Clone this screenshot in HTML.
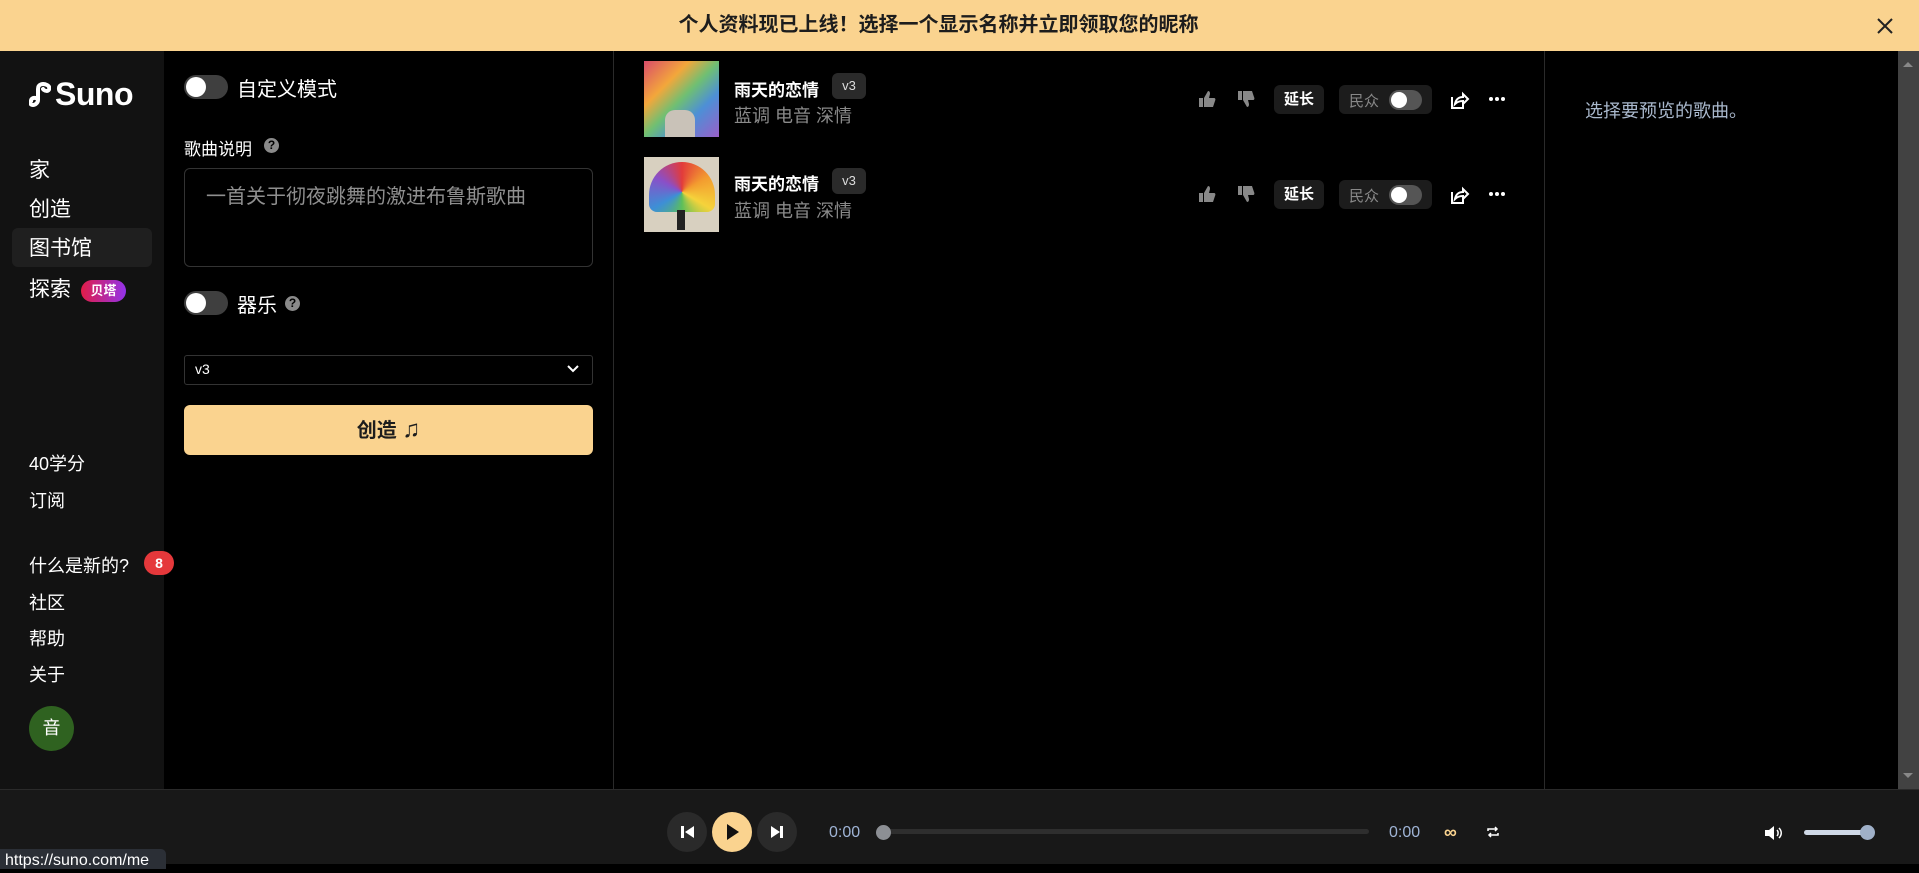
<!DOCTYPE html>
<html><head><meta charset="utf-8"><style>
*{margin:0;padding:0;box-sizing:border-box}
body{width:1919px;height:864px;background:#000;font-family:"Liberation Sans","Noto Sans CJK SC",sans-serif;color:#fff;position:relative;overflow:hidden}
.a{position:absolute}
.banner{left:0;top:0;width:1919px;height:51px;background:#fad38f;color:#1d1d1d;font-weight:bold;font-size:20px;text-align:center;line-height:51px;padding-right:42px}
.side{left:0;top:51px;width:164px;height:738px;background:#121212}
.nav{left:29px;font-size:21px;color:#fff}
.nav2{left:29px;font-size:18px;color:#fff}
.tog{width:44px;height:24px;border-radius:12px;background:#3f3f3f}
.tog::after{content:"";position:absolute;left:2px;top:2px;width:20px;height:20px;border-radius:50%;background:#fff}
.tog.s::after{width:16px;height:16px}
.q{width:15px;height:15px;border-radius:50%;background:#8a8a8a;color:#000;font-size:12px;font-weight:bold;text-align:center;line-height:15px}
.title{font-size:17px;font-weight:bold}
.badge{background:#2a2a2a;border-radius:6px;font-size:13px;color:#ddd;text-align:center;line-height:26px;width:34px;height:26px}
.tags{font-size:18px;color:#8a8a8a}
.pill{background:#1c1c1c;border-radius:6px;height:29px}
</style></head><body>
<div class="a banner">个人资料现已上线！选择一个显示名称并立即领取您的昵称</div>
<svg class="a" style="left:1877px;top:18px" width="16" height="16" viewBox="0 0 16 16"><path d="M1 1L15 15M15 1L1 15" stroke="#222" stroke-width="2"/></svg>

<div class="a side"></div>
<svg class="a" style="left:29px;top:81px" width="22" height="26" viewBox="0 0 22 26"><path d="M2 20c0-4 6-4 7-1 0 3-3 5-5 5S0 22 2 20zM9 19V8c0-5 5-6 9-4 4 2 2 6 0 6-3 0-4-2-4-2" fill="none" stroke="#fff" stroke-width="4" stroke-linecap="round"/></svg>
<div class="a" style="left:55px;top:76px;font-size:32px;font-weight:bold;letter-spacing:-0.5px">Suno</div>
<div class="a nav" style="top:154px">家</div>
<div class="a nav" style="top:193px">创造</div>
<div class="a" style="left:12px;top:228px;width:140px;height:39px;background:#1f1f1f;border-radius:6px"></div>
<div class="a nav" style="top:232px">图书馆</div>
<div class="a nav" style="top:273px">探索</div>
<div class="a" style="left:81px;top:280px;width:45px;height:22px;border-radius:11px;background:linear-gradient(90deg,#e11d48,#9333ea);font-size:13px;font-weight:bold;text-align:center;line-height:22px">贝塔</div>
<div class="a nav2" style="top:450px">40学分</div>
<div class="a nav2" style="top:487px">订阅</div>
<div class="a nav2" style="top:552px">什么是新的?</div>
<div class="a" style="left:144px;top:551px;width:30px;height:24px;border-radius:12px;background:#e5383b;font-size:14px;font-weight:bold;text-align:center;line-height:24px">8</div>
<div class="a nav2" style="top:589px">社区</div>
<div class="a nav2" style="top:625px">帮助</div>
<div class="a nav2" style="top:661px">关于</div>
<div class="a" style="left:29px;top:706px;width:45px;height:45px;border-radius:50%;background:#2f6220;font-size:18px;text-align:center;line-height:45px">音</div>

<div class="a" style="left:613px;top:51px;width:1px;height:738px;background:#2a2a2a"></div>
<div class="a tog" style="left:184px;top:75px"></div>
<div class="a" style="left:237px;top:73px;font-size:20px">自定义模式</div>
<div class="a" style="left:184px;top:135px;font-size:17px">歌曲说明</div>
<div class="a q" style="left:264px;top:138px">?</div>
<div class="a" style="left:184px;top:168px;width:409px;height:99px;border:1px solid #333;border-radius:6px"></div>
<div class="a" style="left:206px;top:180px;font-size:20px;color:#8f8f8f">一首关于彻夜跳舞的激进布鲁斯歌曲</div>
<div class="a tog" style="left:184px;top:291px"></div>
<div class="a" style="left:237px;top:289px;font-size:20px">器乐</div>
<div class="a q" style="left:285px;top:296px">?</div>
<div class="a" style="left:184px;top:355px;width:409px;height:30px;border:1px solid #333;border-radius:3px"></div>
<div class="a" style="left:195px;top:361px;font-size:14px">v3</div>
<svg class="a" style="left:566px;top:364px" width="14" height="10" viewBox="0 0 14 10"><path d="M2 2l5 5 5-5" stroke="#fff" stroke-width="2" fill="none"/></svg>
<div class="a" style="left:184px;top:405px;width:409px;height:50px;background:#fad38f;border-radius:6px;color:#1d1d1d;font-size:20px;font-weight:bold;text-align:center;line-height:50px">创造 <span style="font-size:24px">♫</span></div>

<!-- songs -->
<div class="a" style="left:644px;top:61px;width:75px;height:76px;background:linear-gradient(135deg,#d94c6a,#f3a73b 30%,#6fbf73 50%,#4d8fd6 70%,#9a5fc8);"></div>
<div class="a" style="left:665px;top:110px;width:30px;height:27px;background:#c9c2b8;border-radius:10px 10px 0 0"></div>
<div class="a" style="left:644px;top:157px;width:75px;height:75px;background:#d8d0c0"></div>
<div class="a" style="left:649px;top:162px;width:66px;height:50px;border-radius:33px 33px 8px 8px;background:conic-gradient(from 0deg at 50% 60%,#e23b3b,#f39c2f,#f5d33b,#5cbf5a,#3d8fd6,#8a4fc8,#e23b3b)"></div>
<div class="a" style="left:677px;top:210px;width:8px;height:20px;background:#222"></div>
<div class="a title" style="left:734px;top:76px">雨天的恋情</div>
<div class="a badge" style="left:832px;top:73px">v3</div>
<div class="a tags" style="left:734px;top:102px">蓝调 电音 深情</div>
<div class="a title" style="left:734px;top:170px">雨天的恋情</div>
<div class="a badge" style="left:832px;top:168px">v3</div>
<div class="a tags" style="left:734px;top:197px">蓝调 电音 深情</div>

<svg class="a" style="left:1198px;top:89px" width="320" height="120" viewBox="0 0 320 120">
<g id="r">
<path d="M1 9h4v9H1zM6 9l4-7c2 0 2 2 2 3l-1 4h5c1 0 2 1 1 3l-2 6H6z" fill="#888"/>
<path d="M40 2h4v9h-4zM45 11l4 7c2 0 2-2 2-3l-1-4h5c1 0 2-1 1-3l-2-6h-9z" fill="#888"/>
<path d="M254 8v11h11v-4M257 15c1-5 4-7 8-7V5l5 5-5 5v-3c-4 0-6 1-8 3z" fill="none" stroke="#fff" stroke-width="2"/>
<circle cx="293" cy="10" r="2" fill="#fff"/><circle cx="299" cy="10" r="2" fill="#fff"/><circle cx="305" cy="10" r="2" fill="#fff"/>
</g>
<use href="#r" y="95"/>
</svg>
<div class="a pill" style="left:1274px;top:85px;width:50px;font-size:15px;font-weight:bold;text-align:center;line-height:29px">延长</div>
<div class="a pill" style="left:1339px;top:85px;width:93px"></div>
<div class="a" style="left:1349px;top:90px;font-size:15px;color:#888">民众</div>
<div class="a tog s" style="left:1389px;top:90px;width:33px;height:20px;background:#555"></div>
<div class="a pill" style="left:1274px;top:180px;width:50px;font-size:15px;font-weight:bold;text-align:center;line-height:29px">延长</div>
<div class="a pill" style="left:1339px;top:180px;width:93px"></div>
<div class="a" style="left:1349px;top:185px;font-size:15px;color:#888">民众</div>
<div class="a tog s" style="left:1389px;top:185px;width:33px;height:20px;background:#555"></div>

<div class="a" style="left:1544px;top:51px;width:1px;height:738px;background:#2a2a2a"></div>
<div class="a" style="left:1585px;top:97px;font-size:18px;color:#a9b8cc">选择要预览的歌曲。</div>
<div class="a" style="left:1898px;top:51px;width:21px;height:738px;background:#424242"></div>
<svg class="a" style="left:1902px;top:60px" width="12" height="8"><path d="M1 7L6 2 11 7z" fill="#888"/></svg>
<svg class="a" style="left:1902px;top:772px" width="12" height="8"><path d="M1 1L6 6 11 1z" fill="#888"/></svg>

<!-- player -->
<div class="a" style="left:0;top:789px;width:1919px;height:75px;background:#181818;border-top:1px solid #2a2a2a"></div>
<div class="a" style="left:667px;top:812px;width:40px;height:40px;border-radius:50%;background:#2a2a2a"></div>
<div class="a" style="left:712px;top:812px;width:40px;height:40px;border-radius:50%;background:#fad38f"></div>
<div class="a" style="left:757px;top:812px;width:40px;height:40px;border-radius:50%;background:#2a2a2a"></div>
<svg class="a" style="left:667px;top:812px" width="130" height="40"><path d="M14 14h3v12h-3zM27 14l-9 6 9 6z" fill="#fff"/><path d="M60 12l12 8-12 8z" fill="#111"/><path d="M104 14l9 6-9 6zM113 14h3v12h-3z" fill="#fff"/></svg>
<div class="a" style="left:829px;top:824px;font-size:16px;color:#9fb4d6">0:00</div>
<div class="a" style="left:878px;top:829px;width:491px;height:5px;border-radius:3px;background:#2e2e2e"></div>
<div class="a" style="left:876px;top:825px;width:15px;height:15px;border-radius:50%;background:#8c8f94"></div>
<div class="a" style="left:1389px;top:824px;font-size:16px;color:#9fb4d6">0:00</div>
<div class="a" style="left:1444px;top:822px;font-size:18px;color:#fad38f;font-weight:bold">∞</div>
<svg class="a" style="left:1486px;top:825px" width="14" height="14"><path d="M2 6V4h9M9 2l2 2-2 2M12 8v2H3M5 12l-2-2 2-2" stroke="#fff" stroke-width="1.5" fill="none"/></svg>
<svg class="a" style="left:1764px;top:825px" width="20" height="16"><path d="M1 5h4l5-4v14l-5-4H1z" fill="#fff"/><path d="M13 5c1.5 1.5 1.5 4.5 0 6M15 3c3 3 3 7 0 10" stroke="#fff" stroke-width="1.5" fill="none"/></svg>
<div class="a" style="left:1804px;top:830px;width:64px;height:5px;border-radius:3px;background:#cfd8e6"></div>
<div class="a" style="left:1860px;top:825px;width:15px;height:15px;border-radius:50%;background:#9fb0c8"></div>
<div class="a" style="left:0;top:849px;width:166px;height:20px;background:#2b2f36;border-radius:0 5px 0 0;font-size:16px;color:#fff;padding-left:5px;line-height:24px">https://suno.com/me</div>
</body></html>
